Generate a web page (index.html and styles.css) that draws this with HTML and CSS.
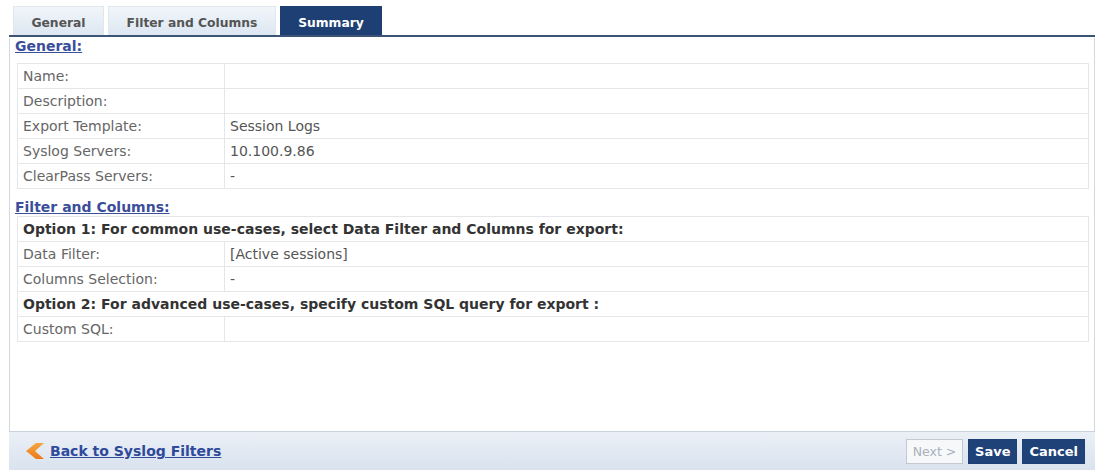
FILE: index.html
```html
<!DOCTYPE html>
<html>
<head>
<meta charset="utf-8">
<link rel="stylesheet" href="styles.css">
</head>
<body>
<div class="page">
  <div class="tabs">
    <div class="tab">General</div>
    <div class="tab tab-wide">Filter and Columns</div>
    <div class="tab active">Summary</div>
  </div>
  <div class="panel">
    <div class="content">
      <a class="section-link" href="#">General:</a>
      <table class="grid">
        <tr><td class="lbl">Name:</td><td></td></tr>
        <tr><td class="lbl">Description:</td><td></td></tr>
        <tr><td class="lbl">Export Template:</td><td>Session Logs</td></tr>
        <tr><td class="lbl">Syslog Servers:</td><td>10.100.9.86</td></tr>
        <tr><td class="lbl">ClearPass Servers:</td><td>-</td></tr>
      </table>
      <a class="section-link" href="#">Filter and Columns:</a>
      <table class="grid">
        <tr><td class="opt" colspan="2">Option 1: For common use-cases, select Data Filter and Columns for export:</td></tr>
        <tr><td class="lbl">Data Filter:</td><td>[Active sessions]</td></tr>
        <tr><td class="lbl">Columns Selection:</td><td>-</td></tr>
        <tr><td class="opt" colspan="2">Option 2: For advanced use-cases, specify custom SQL query for export :</td></tr>
        <tr><td class="lbl">Custom SQL:</td><td></td></tr>
      </table>
    </div>
    <div class="footer">
      <a class="back" href="#">
        <svg class="chev" width="22" height="18" viewBox="0 0 22 18"><defs><linearGradient id="cg" x1="0" y1="0" x2="0" y2="1"><stop offset="0" stop-color="#f6a640"/><stop offset="1" stop-color="#ec7a1c"/></linearGradient></defs><path d="M12 1 L2 9 L12 17 L20 17 L11 9 L20 1 Z" fill="url(#cg)"/></svg>
        <span>Back to Syslog Filters</span>
      </a>
      <div class="buttons">
        <span class="btn disabled">Next &gt;</span>
        <span class="btn primary">Save</span>
        <span class="btn primary">Cancel</span>
      </div>
    </div>
  </div>
</div>
</body>
</html>
```
FILE: styles.css
```css
html, body {
  margin: 0;
  padding: 0;
  background: #ffffff;
}
body {
  font-family: "DejaVu Sans", Verdana, sans-serif;
  font-size: 14px;
  color: #555;
}
.page {
  padding: 6px 6px 0 9px;
}
.tabs {
  display: flex;
  gap: 4px;
  padding-left: 4px;
  border-bottom: 2px solid #3b5478;
  height: 29px;
}
.tab {
  width: 91px;
  height: 29px;
  box-sizing: border-box;
  background: linear-gradient(#f1f5fa, #dde7f2);
  border: 1px solid #e0e6ee;
  border-bottom: none;
  font-weight: bold;
  font-size: 12.3px;
  color: #555;
  display: flex;
  align-items: center;
  justify-content: center;
  padding-top: 3px;
}
.tab-wide { width: 168px; }
.tab.active {
  width: 102px;
  background: #1d3f74;
  border-color: #1d3f74;
  color: #fff;
}
.panel {
  border: 1px solid #d4d8de;
  border-top: none;
  height: 433px;
  box-sizing: border-box;
  display: flex;
  flex-direction: column;
  margin-top: 1px;
}
.content {
  flex: 1;
  padding: 1px 5px 0 5px;
}
.section-link {
  display: block;
  font-weight: bold;
  font-size: 14px;
  color: #3a4e9a;
  text-decoration: underline;
  height: 14px;
  line-height: 14px;
  margin-bottom: 10px;
}
.content table + .section-link { margin-top: 11px; margin-bottom: 2px; }
.grid {
  width: 1072px;
  margin-left: 2px;
  border-collapse: collapse;
  border: 1px solid #e4e6ea;
}
.grid td {
  border: 1px solid #e4e6ea;
  height: 24px;
  padding: 0 0 0 5px;
  font-size: 14px;
  line-height: 16px;
  color: #555;
  vertical-align: middle;
}
.grid td.lbl {
  width: 201px;
  color: #666;
}
.grid td.opt {
  font-weight: bold;
  color: #333;
}
.footer {
  height: 38px;
  border-top: 1px solid #c9d3e0;
  background: linear-gradient(#ebf0f7, #d9e2ee);
  display: flex;
  align-items: center;
  justify-content: space-between;
  padding: 0 10px 0 15px;
  margin: 0 -1px;
}
.back {
  display: flex;
  align-items: center;
  gap: 4px;
  color: #2e4a9a;
  font-weight: bold;
  font-size: 14px;
  text-decoration: underline;
}
.chev { display: block; }
.buttons {
  display: flex;
  gap: 5px;
}
.btn {
  height: 25px;
  box-sizing: border-box;
  padding: 0 6px;
  display: flex;
  align-items: center;
  justify-content: center;
  font-weight: bold;
  font-size: 13px;
  white-space: nowrap;
  border: 1px solid #1d3f74;
}
.btn.primary {
  background: #1f4279;
  color: #fff;
}
.btn.disabled {
  background: #f7f8fa;
  border-color: #c4c8d0;
  color: #aab0ba;
  font-weight: normal;
  font-size: 12.5px;
  width: 57px;
  padding: 0;
}
```
